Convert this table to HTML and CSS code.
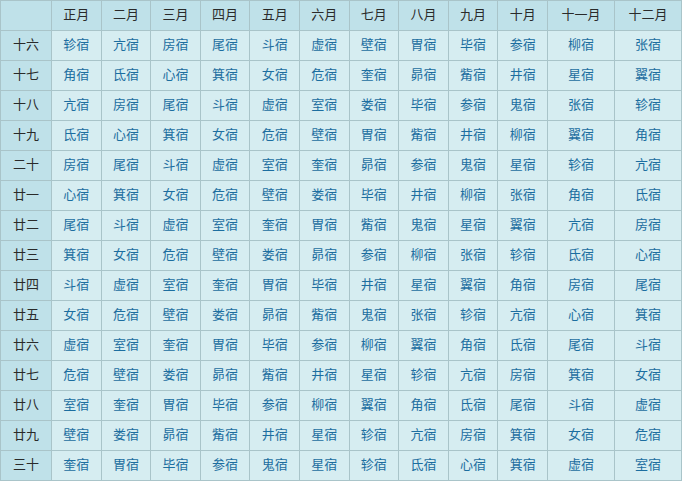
FILE: index.html
```html
<!DOCTYPE html>
<html lang="zh">
<head>
<meta charset="utf-8">
<link rel="stylesheet" href="styles.css">
</head>
<body>
<table class="xiu">
<colgroup>
<col class="c-day">
<col class="c-m"><col class="c-m"><col class="c-m"><col class="c-m"><col class="c-m">
<col class="c-m"><col class="c-m"><col class="c-m"><col class="c-m"><col class="c-m">
<col class="c-w1"><col class="c-w2">
</colgroup>
<thead>
<tr><th></th><th>正月</th><th>二月</th><th>三月</th><th>四月</th><th>五月</th><th>六月</th><th>七月</th><th>八月</th><th>九月</th><th>十月</th><th>十一月</th><th>十二月</th></tr>
</thead>
<tbody>
<tr><th>十六</th><td>轸宿</td><td>亢宿</td><td>房宿</td><td>尾宿</td><td>斗宿</td><td>虚宿</td><td>壁宿</td><td>胃宿</td><td>毕宿</td><td>参宿</td><td>柳宿</td><td>张宿</td></tr>
<tr><th>十七</th><td>角宿</td><td>氐宿</td><td>心宿</td><td>箕宿</td><td>女宿</td><td>危宿</td><td>奎宿</td><td>昴宿</td><td>觜宿</td><td>井宿</td><td>星宿</td><td>翼宿</td></tr>
<tr><th>十八</th><td>亢宿</td><td>房宿</td><td>尾宿</td><td>斗宿</td><td>虚宿</td><td>室宿</td><td>娄宿</td><td>毕宿</td><td>参宿</td><td>鬼宿</td><td>张宿</td><td>轸宿</td></tr>
<tr><th>十九</th><td>氐宿</td><td>心宿</td><td>箕宿</td><td>女宿</td><td>危宿</td><td>壁宿</td><td>胃宿</td><td>觜宿</td><td>井宿</td><td>柳宿</td><td>翼宿</td><td>角宿</td></tr>
<tr><th>二十</th><td>房宿</td><td>尾宿</td><td>斗宿</td><td>虚宿</td><td>室宿</td><td>奎宿</td><td>昴宿</td><td>参宿</td><td>鬼宿</td><td>星宿</td><td>轸宿</td><td>亢宿</td></tr>
<tr><th>廿一</th><td>心宿</td><td>箕宿</td><td>女宿</td><td>危宿</td><td>壁宿</td><td>娄宿</td><td>毕宿</td><td>井宿</td><td>柳宿</td><td>张宿</td><td>角宿</td><td>氐宿</td></tr>
<tr><th>廿二</th><td>尾宿</td><td>斗宿</td><td>虚宿</td><td>室宿</td><td>奎宿</td><td>胃宿</td><td>觜宿</td><td>鬼宿</td><td>星宿</td><td>翼宿</td><td>亢宿</td><td>房宿</td></tr>
<tr><th>廿三</th><td>箕宿</td><td>女宿</td><td>危宿</td><td>壁宿</td><td>娄宿</td><td>昴宿</td><td>参宿</td><td>柳宿</td><td>张宿</td><td>轸宿</td><td>氐宿</td><td>心宿</td></tr>
<tr><th>廿四</th><td>斗宿</td><td>虚宿</td><td>室宿</td><td>奎宿</td><td>胃宿</td><td>毕宿</td><td>井宿</td><td>星宿</td><td>翼宿</td><td>角宿</td><td>房宿</td><td>尾宿</td></tr>
<tr><th>廿五</th><td>女宿</td><td>危宿</td><td>壁宿</td><td>娄宿</td><td>昴宿</td><td>觜宿</td><td>鬼宿</td><td>张宿</td><td>轸宿</td><td>亢宿</td><td>心宿</td><td>箕宿</td></tr>
<tr><th>廿六</th><td>虚宿</td><td>室宿</td><td>奎宿</td><td>胃宿</td><td>毕宿</td><td>参宿</td><td>柳宿</td><td>翼宿</td><td>角宿</td><td>氐宿</td><td>尾宿</td><td>斗宿</td></tr>
<tr><th>廿七</th><td>危宿</td><td>壁宿</td><td>娄宿</td><td>昴宿</td><td>觜宿</td><td>井宿</td><td>星宿</td><td>轸宿</td><td>亢宿</td><td>房宿</td><td>箕宿</td><td>女宿</td></tr>
<tr><th>廿八</th><td>室宿</td><td>奎宿</td><td>胃宿</td><td>毕宿</td><td>参宿</td><td>柳宿</td><td>翼宿</td><td>角宿</td><td>氐宿</td><td>尾宿</td><td>斗宿</td><td>虚宿</td></tr>
<tr><th>廿九</th><td>壁宿</td><td>娄宿</td><td>昴宿</td><td>觜宿</td><td>井宿</td><td>星宿</td><td>轸宿</td><td>亢宿</td><td>房宿</td><td>箕宿</td><td>女宿</td><td>危宿</td></tr>
<tr><th>三十</th><td>奎宿</td><td>胃宿</td><td>毕宿</td><td>参宿</td><td>鬼宿</td><td>星宿</td><td>轸宿</td><td>氐宿</td><td>心宿</td><td>箕宿</td><td>虚宿</td><td>室宿</td></tr>
</tbody>
</table>
</body>
</html>
```

FILE: styles.css
```css
html, body {
  margin: 0;
  padding: 0;
  background: #ffffff;
}

.xiu {
  border-collapse: collapse;
  table-layout: fixed;
  width: 681px;
  font-family: "Noto Sans CJK SC", "Liberation Sans", sans-serif;
  font-size: 13px;
  border: 1px solid #a9c4c9;
}

.c-day { width: 51px; }
.c-m { width: 49.6px; }
.c-w1 { width: 67px; }
.c-w2 { width: 67px; }

.xiu th,
.xiu td {
  height: 25px;
  padding: 0 0 4px;
  text-align: center;
  vertical-align: middle;
  border: 1px solid #a9c4c9;
  line-height: 16px;
}

.xiu th {
  background: #bfe1e9;
  color: #2a2a2a;
  font-weight: normal;
}

.xiu td {
  background: #d6edf1;
  color: #1c6ea0;
}
```
